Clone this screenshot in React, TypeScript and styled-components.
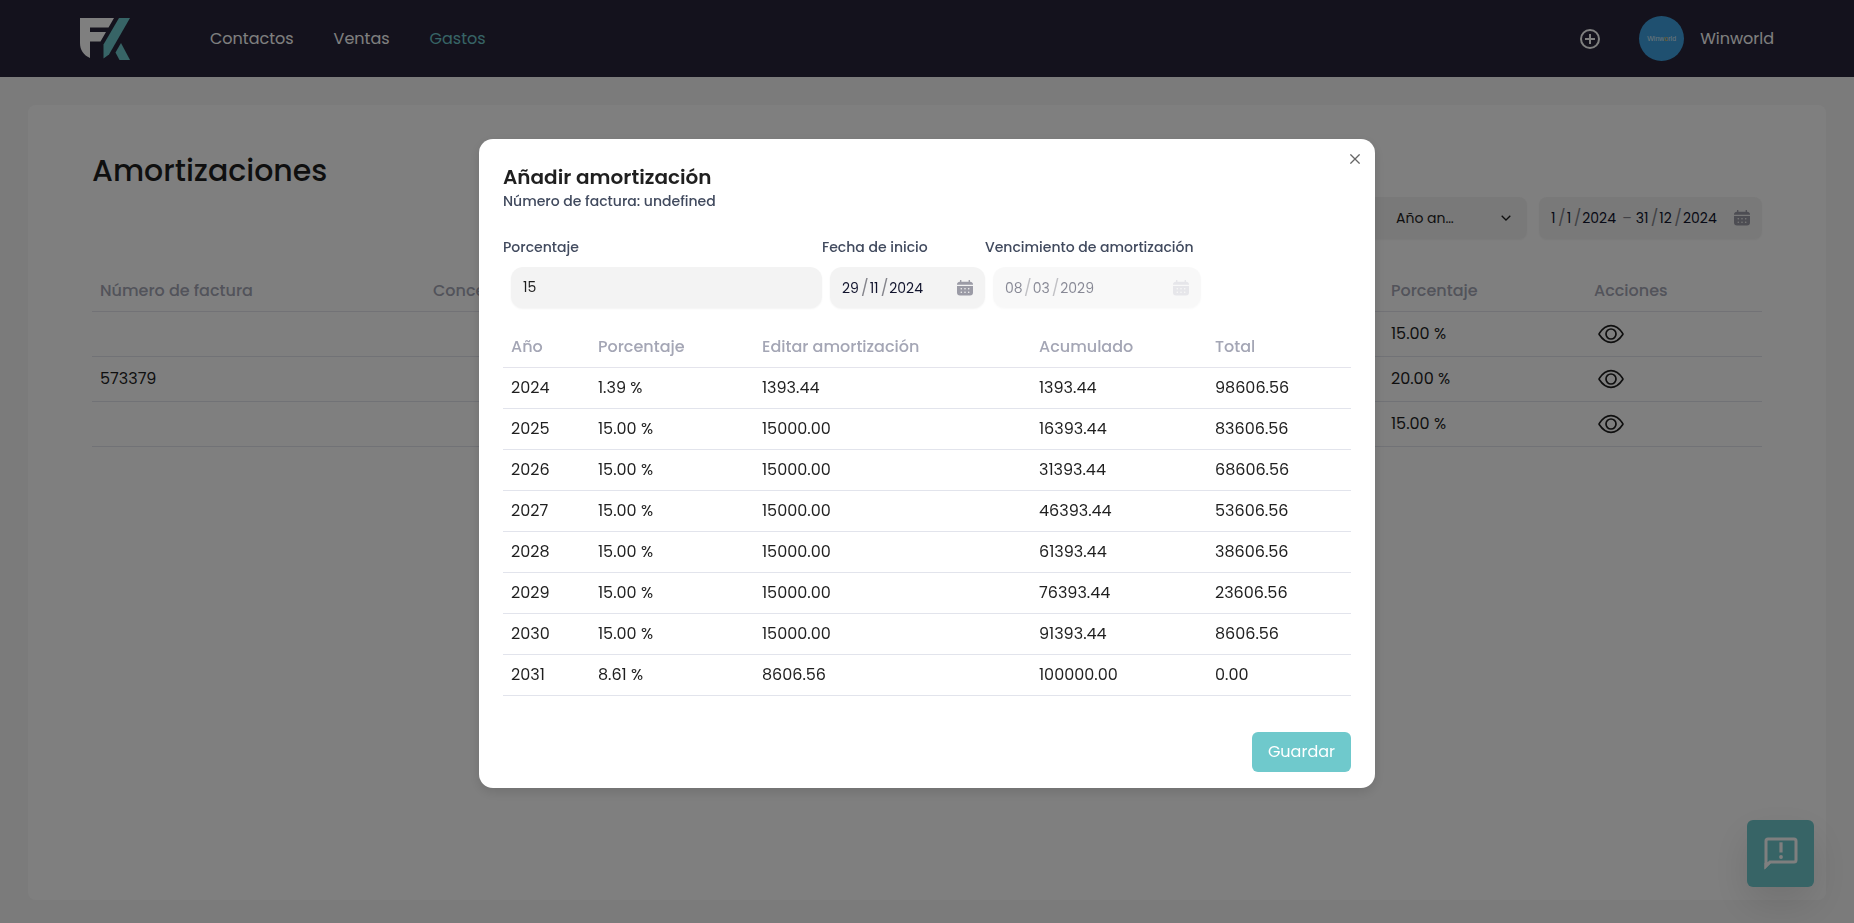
import React from "react";
import styled, { createGlobalStyle } from "styled-components";

const GlobalStyle = createGlobalStyle`
  *, *::before, *::after { box-sizing: border-box; }
  body {
    margin: 0;
    background: #f7f7f7;
    color: #1f1f1f;
    font-family: Poppins, Inter, "Open Sans", sans-serif;
    font-size: 16px;
    line-height: 24px;
  }
  button, input, select { font: inherit; color: inherit; }
  h1, h2, p { margin: 0; }
`;

/* ---------- Page shell ---------- */

const Page = styled.div`
  min-height: 100vh;
  display: flex;
  flex-direction: column;
`;

const Header = styled.header`
  display: flex;
  align-items: center;
  height: 77px;
  padding: 0 80px;
  background: #28253a;
  color: #fff;
`;

const LogoLink = styled.a`
  display: flex;
  margin-right: 80px;
`;

const Nav = styled.nav`
  display: flex;
  gap: 40px;
  flex: 1;
`;

const NavLink = styled.a<{ $active?: boolean }>`
  color: ${(p) => (p.$active ? "#6fc9cc" : "#fff")};
  text-decoration: none;
`;

const IconButton = styled.button`
  display: flex;
  padding: 0;
  border: 0;
  background: none;
  cursor: pointer;
`;

const Account = styled.div`
  display: flex;
  align-items: center;
  gap: 16px;
  margin-left: 39px;
`;

const Avatar = styled.span`
  display: flex;
  align-items: center;
  justify-content: center;
  width: 45px;
  height: 45px;
  border-radius: 50%;
  background: #3fa0e0;
  color: #dcecf5;
  font-family: "Liberation Sans", Arial, sans-serif;
  font-size: 7px;
`;

const AvatarAccent = styled.span`
  color: #f0c040;
`;

const Card = styled.main`
  flex: 1;
  margin: 28px 28px 23px;
  padding: 44px 64px;
  border-radius: 8px;
  background: #fff;
`;

const PageTitle = styled.h1`
  font-size: 30px;
  font-weight: 500;
  line-height: 44px;
`;

const Filters = styled.div`
  display: flex;
  justify-content: flex-end;
  gap: 12px;
  margin-top: 4px;
`;

/* ---------- Fields ---------- */

const SelectBox = styled.div`
  display: flex;
  align-items: center;
  width: 176px;
  height: 42px;
  padding: 0 16px 0 45px;
  border-radius: 8px;
  background: #f3f3f3;
  box-shadow: 0 1px 2px rgba(0, 0, 0, 0.05);
`;

const Select = styled.select`
  flex: 1;
  min-width: 0;
  padding: 0;
  border: 0;
  appearance: none;
  background: none;
  font-size: 14px;
`;

const FieldBox = styled.div<{ $width: number; $disabled?: boolean; $round?: number }>`
  display: flex;
  align-items: center;
  justify-content: space-between;
  width: ${(p) => p.$width}px;
  height: ${(p) => (p.$round === 8 ? 42 : 41)}px;
  padding: 0 12px;
  border-radius: ${(p) => p.$round ?? 12}px;
  background: #f3f3f3;
  box-shadow: 0 1px 2px rgba(0, 0, 0, 0.05);
  opacity: ${(p) => (p.$disabled ? 0.5 : 1)};
  color: #11142d;
  font-size: 14px;
`;

const Segments = styled.div<{ $gap?: number }>`
  display: flex;
  align-items: center;
  gap: ${(p) => p.$gap ?? 1}px;
`;

const Segment = styled.input<{ $width: number }>`
  width: ${(p) => p.$width}px;
  padding: 0;
  border: 0;
  outline: 0;
  background: none;
`;

const Separator = styled.span`
  color: #85858c;
  font-size: 16px;
`;

const RangeDash = styled.span`
  color: #85858c;
  font-size: 14px;
`;

const TextInput = styled.input`
  width: 311px;
  height: 41px;
  padding: 0 12px;
  border: 0;
  border-radius: 12px;
  background: #f3f3f3;
  box-shadow: 0 1px 2px rgba(0, 0, 0, 0.05);
  font-size: 14px;
`;

/* ---------- Tables ---------- */

const Table = styled.table`
  width: 100%;
  border-collapse: collapse;
  table-layout: fixed;
`;

const Col = styled.col<{ $width?: number }>`
  width: ${(p) => (p.$width ? `${p.$width}px` : "auto")};
`;

const HeadCell = styled.th`
  height: 40px;
  padding: 0 8px;
  border-bottom: 1px solid #e4e4ec;
  color: #a4a6b5;
  font-weight: 500;
  text-align: left;
`;

const Cell = styled.td<{ $tall?: boolean }>`
  height: ${(p) => (p.$tall ? 45 : 41)}px;
  padding: 0 8px;
  border-bottom: 1px solid #e2e4ec;
`;

const EyeButton = styled(IconButton)`
  margin-left: 4px;
`;

const PageTable = styled.div`
  margin-top: 32px;
`;

/* ---------- Dialog ---------- */

const Overlay = styled.div`
  position: fixed;
  inset: 0;
  display: flex;
  align-items: flex-start;
  justify-content: center;
  padding-top: 139px;
  background: rgba(0, 0, 0, 0.5);
`;

const Dialog = styled.section`
  position: relative;
  width: 100%;
  max-width: 896px;
  padding: 24px 24px 16px;
  border-radius: 14px;
  background: #fff;
  box-shadow: 0 4px 12px rgba(0, 0, 0, 0.12);
`;

const CloseButton = styled(IconButton)`
  position: absolute;
  top: 12px;
  right: 12px;
  padding: 3px;
`;

const DialogTitle = styled.h2`
  font-size: 20px;
  font-weight: 600;
  line-height: 28px;
`;

const DialogSubtitle = styled.p`
  color: #414a5e;
  font-size: 14px;
  font-weight: 500;
  line-height: 20px;
`;

const Form = styled.form`
  display: flex;
  margin-top: 24px;
`;

const Field = styled.div`
  display: flex;
  flex-direction: column;
  gap: 8px;
`;

const FieldLabel = styled.label`
  height: 24px;
  color: #414a5e;
  font-size: 14px;
  font-weight: 500;
  white-space: nowrap;
`;

const FieldControl = styled.div`
  padding-left: 8px;
`;

const DialogTable = styled.div`
  margin-top: 19px;
`;

const Actions = styled.footer`
  display: flex;
  justify-content: flex-end;
  margin-top: 36px;
`;

const PrimaryButton = styled.button`
  height: 40px;
  padding: 0 16px;
  border: 0;
  border-radius: 6px;
  background: #6fc9cc;
  color: #fff;
  cursor: pointer;
`;

const FeedbackButton = styled.button`
  position: fixed;
  right: 40px;
  bottom: 36px;
  display: flex;
  align-items: center;
  justify-content: center;
  width: 67px;
  height: 67px;
  padding: 0;
  border: 0;
  border-radius: 6px;
  background: #6fc9cc;
  color: #fff;
  box-shadow: 0 16px 40px rgba(0, 0, 0, 0.12);
`;

/* ---------- Drawings ---------- */

const Logo = () => (
  <svg width="50" height="42" viewBox="0 0 50 42" aria-hidden="true">
    <path d="M0 0H34L28.500 9.500H10V14H26L20.500 23.500H10V40C3.500 37 0 32 0 25Z" fill="#fff" />
    <path d="M39 0H50L29 36.500L23.500 40.500V26.500Z" fill="#6fc9cc" />
    <path d="M41 25L50 42H39.500L35.500 34.500Z" fill="#6fc9cc" />
  </svg>
);

const PlusCircle = () => (
  <svg width="20" height="20" viewBox="0 0 20 20" fill="none" stroke="#fff" strokeWidth="2" aria-hidden="true">
    <circle cx="10" cy="10" r="9" />
    <path d="M10 5V15M5 10H15" />
  </svg>
);

const Chevron = () => (
  <svg width="10" height="6" viewBox="0 0 10 6" fill="none" stroke="#1f1f1f" strokeWidth="1.300" aria-hidden="true">
    <path d="M0.700 0.700L5 5L9.300 0.700" />
  </svg>
);

const Calendar = ({ faded }: { faded?: boolean }) => (
  <svg width="16" height="16" viewBox="0 0 16 16" aria-hidden="true">
    <g fill={faded ? "#ceced6" : "#9b9ba6"}>
      <path d="M3 0.500a.7.700 0 0 1 1.400 0V1.800H11.600V0.500a.7.700 0 0 1 1.400 0V1.800A2.600 2.600 0 0 1 16 4.400V4.800H0V4.400A2.600 2.600 0 0 1 3 1.800Z" />
      <path d="M0 6H16V12.500A3 3 0 0 1 13 15.500H3A3 3 0 0 1 0 12.500Z" />
    </g>
    <g fill="#f3f3f3">
      <circle cx="4.300" cy="8.800" r=".8" />
      <circle cx="8" cy="8.800" r=".8" />
      <circle cx="11.700" cy="8.800" r=".8" />
      <circle cx="4.300" cy="12.200" r=".8" />
      <circle cx="8" cy="12.200" r=".8" />
      <circle cx="11.700" cy="12.200" r=".8" />
    </g>
  </svg>
);

const Eye = () => (
  <svg width="26" height="20" viewBox="0 0 26 20" fill="none" stroke="#1f1f1f" strokeWidth="1.700" aria-hidden="true">
    <path d="M1.400 9.200C5 3.800 8.700 1.600 13 1.600S21 3.800 24.600 9.200Q25.200 10 24.600 10.800C21 16.200 17.300 18.400 13 18.400S5 16.200 1.400 10.800Q.8 10 1.400 9.200Z" />
    <circle cx="13" cy="10" r="5" />
  </svg>
);

const Close = () => (
  <svg width="10" height="10" viewBox="0 0 10 10" fill="none" stroke="#666" strokeWidth="1.300" aria-hidden="true">
    <path d="M0.400 0.400L9.600 9.600M9.600 0.400L0.400 9.600" />
  </svg>
);

const Feedback = () => (
  <svg width="34" height="34" viewBox="0 0 34 34" aria-hidden="true">
    <path d="M2 29V4Q2 2 4 2H30Q32 2 32 4V23Q32 25 30 25H6Z" fill="none" stroke="currentColor" strokeWidth="3" />
    <path d="M.5 26V32.500L8 25Z" fill="currentColor" />
    <path d="M15.400 5.300H18.600V15.500H15.400Z" fill="currentColor" />
    <circle cx="17" cy="20" r="1.900" fill="currentColor" />
  </svg>
);

/* ---------- Date parts ---------- */

type Part = [value: string, width: number];

const DateParts = ({ name, parts, disabled }: { name: string; parts: Part[]; disabled?: boolean }) => (
  <Segments>
    {parts.map(([value, width], i) => (
      <React.Fragment key={i}>
        {i > 0 && <Separator>/</Separator>}
        <Segment
          id={i === 0 ? name : undefined}
          aria-label={`${name} ${["día", "mes", "año"][i]}`}
          $width={width}
          defaultValue={value}
          disabled={disabled}
        />
      </React.Fragment>
    ))}
  </Segments>
);

/* ---------- Data ---------- */

const invoices = [
  { number: "", percent: "15.00 %" },
  { number: "573379", percent: "20.00 %" },
  { number: "", percent: "15.00 %" },
];

const schedule = [
  ["2024", "1.39 %", "1393.44", "1393.44", "98606.56"],
  ["2025", "15.00 %", "15000.00", "16393.44", "83606.56"],
  ["2026", "15.00 %", "15000.00", "31393.44", "68606.56"],
  ["2027", "15.00 %", "15000.00", "46393.44", "53606.56"],
  ["2028", "15.00 %", "15000.00", "61393.44", "38606.56"],
  ["2029", "15.00 %", "15000.00", "76393.44", "23606.56"],
  ["2030", "15.00 %", "15000.00", "91393.44", "8606.56"],
  ["2031", "8.61 %", "8606.56", "100000.00", "0.00"],
];

export default function App() {
  return (
    <>
      <GlobalStyle />
      <Page>
        <Header>
          <LogoLink href="#" aria-label="Inicio">
            <Logo />
          </LogoLink>
          <Nav>
            <NavLink href="#contactos">Contactos</NavLink>
            <NavLink href="#ventas">Ventas</NavLink>
            <NavLink href="#gastos" $active>
              Gastos
            </NavLink>
          </Nav>
          <IconButton aria-label="Añadir">
            <PlusCircle />
          </IconButton>
          <Account>
            <Avatar>
              <span>
                Winw<AvatarAccent>o</AvatarAccent>rld
              </span>
            </Avatar>
            <span>Winworld</span>
          </Account>
        </Header>

        <Card>
          <PageTitle>Amortizaciones</PageTitle>
          <Filters>
            <SelectBox>
              <Select aria-label="Periodo">
                <option>Año an…</option>
              </Select>
              <Chevron />
            </SelectBox>
            <FieldBox $width={223} $round={8}>
              <Segments $gap={4}>
                <DateParts name="desde" parts={[["1", 6], ["1", 6], ["2024", 36]]} />
                <RangeDash>–</RangeDash>
                <DateParts name="hasta" parts={[["31", 14], ["12", 14], ["2024", 36]]} />
              </Segments>
              <Calendar />
            </FieldBox>
          </Filters>
          <PageTable>
            <Table>
              <colgroup>
                <Col $width={333} />
                <Col />
                <Col $width={203} />
                <Col $width={176} />
              </colgroup>
              <thead>
                <tr>
                  <HeadCell>Número de factura</HeadCell>
                  <HeadCell>Concepto</HeadCell>
                  <HeadCell>Porcentaje</HeadCell>
                  <HeadCell>Acciones</HeadCell>
                </tr>
              </thead>
              <tbody>
                {invoices.map((row, i) => (
                  <tr key={i}>
                    <Cell $tall>{row.number}</Cell>
                    <Cell $tall />
                    <Cell $tall>{row.percent}</Cell>
                    <Cell $tall>
                      <EyeButton aria-label="Ver amortización">
                        <Eye />
                      </EyeButton>
                    </Cell>
                  </tr>
                ))}
              </tbody>
            </Table>
          </PageTable>
        </Card>
      </Page>

      <FeedbackButton aria-label="Enviar comentarios">
        <Feedback />
      </FeedbackButton>

      <Overlay>
        <Dialog role="dialog" aria-modal="true" aria-labelledby="dialog-title">
          <CloseButton aria-label="Cerrar">
            <Close />
          </CloseButton>
          <DialogTitle id="dialog-title">Añadir amortización</DialogTitle>
          <DialogSubtitle>Número de factura: undefined</DialogSubtitle>
          <Form>
            <Field>
              <FieldLabel htmlFor="porcentaje">Porcentaje</FieldLabel>
              <FieldControl>
                <TextInput id="porcentaje" defaultValue="15" />
              </FieldControl>
            </Field>
            <Field>
              <FieldLabel htmlFor="inicio">Fecha de inicio</FieldLabel>
              <FieldControl>
                <FieldBox $width={155}>
                  <DateParts name="inicio" parts={[["29", 18], ["11", 10], ["2024", 36]]} />
                  <Calendar />
                </FieldBox>
              </FieldControl>
            </Field>
            <Field>
              <FieldLabel htmlFor="vencimiento">Vencimiento de amortización</FieldLabel>
              <FieldControl>
                <FieldBox $width={208} $disabled>
                  <DateParts name="vencimiento" parts={[["08", 18], ["03", 18], ["2029", 36]]} disabled />
                  <Calendar faded />
                </FieldBox>
              </FieldControl>
            </Field>
          </Form>
          <DialogTable>
            <Table>
              <colgroup>
                <Col $width={87} />
                <Col $width={164} />
                <Col $width={277} />
                <Col $width={176} />
                <Col />
              </colgroup>
              <thead>
                <tr>
                  <HeadCell>Año</HeadCell>
                  <HeadCell>Porcentaje</HeadCell>
                  <HeadCell>Editar amortización</HeadCell>
                  <HeadCell>Acumulado</HeadCell>
                  <HeadCell>Total</HeadCell>
                </tr>
              </thead>
              <tbody>
                {schedule.map((row) => (
                  <tr key={row[0]}>
                    {row.map((value, i) => (
                      <Cell key={i}>{value}</Cell>
                    ))}
                  </tr>
                ))}
              </tbody>
            </Table>
          </DialogTable>
          <Actions>
            <PrimaryButton type="button">Guardar</PrimaryButton>
          </Actions>
        </Dialog>
      </Overlay>
    </>
  );
}
